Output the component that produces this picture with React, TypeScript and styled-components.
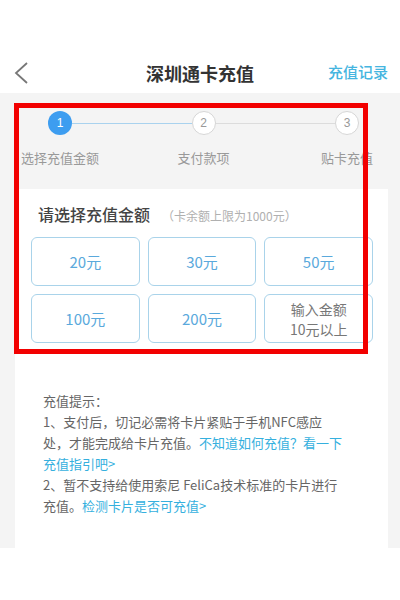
import * as React from "react";
import styled, { createGlobalStyle } from "styled-components";

const GlobalStyle = createGlobalStyle`
  html, body {
    margin: 0;
    padding: 0;
    background: #fff;
  }
  body {
    font-family: "Noto Sans CJK SC", "Noto Sans", sans-serif;
    color: #444;
  }
`;

const AMOUNTS = ["20元", "30元", "50元", "100元", "200元"];

const STEPS = [
  { n: 1, label: "选择充值金额", active: true },
  { n: 2, label: "支付款项", active: false },
  { n: 3, label: "贴卡充值", active: false },
];

const App = () => (
  <Page>
    <GlobalStyle />
    <NavBar>
      <BackButton aria-label="返回">
        <svg width="16" height="24" viewBox="0 0 16 24">
          <polyline points="13,2 2,12 13,22" fill="none" stroke="#777" strokeWidth="1.8" />
        </svg>
      </BackButton>
      <Title>深圳通卡充值</Title>
      <NavLink>充值记录</NavLink>
    </NavBar>

    <Body>
      <Stepper>
        {STEPS.map((s, i) => (
          <React.Fragment key={s.n}>
            {i > 0 && <Connector done={i === 1} />}
            <Step>
              <StepDot active={s.active}>{s.n}</StepDot>
              <StepLabel>{s.label}</StepLabel>
            </Step>
          </React.Fragment>
        ))}
      </Stepper>

      <Card>
        <CardTitle>
          请选择充值金额<Hint>（卡余额上限为1000元）</Hint>
        </CardTitle>
        <AmountGrid>
          {AMOUNTS.map((a) => (
            <AmountButton key={a}>{a}</AmountButton>
          ))}
          <AmountButton custom>
            <span>输入金额</span>
            <span>10元以上</span>
          </AmountButton>
        </AmountGrid>

        <Tips>
          <TipLine>充值提示：</TipLine>
          <TipLine>1、支付后，切记必需将卡片紧贴于手机NFC感应</TipLine>
          <TipLine>
            处，才能完成给卡片充值。<TipLink>不知道如何充值？看一下</TipLink>
          </TipLine>
          <TipLine>
            <TipLink>充值指引吧&gt;</TipLink>
          </TipLine>
          <TipLine>2、暂不支持给使用索尼 FeliCa技术标准的卡片进行</TipLine>
          <TipLine>
            充值。<TipLink>检测卡片是否可充值&gt;</TipLink>
          </TipLine>
        </Tips>
      </Card>
    </Body>

    <Highlight />
  </Page>
);

const Page = styled.div`
  position: relative;
  width: 400px;
  height: 600px;
  overflow: hidden;
  background: #fff;
  padding-top: 52px;
  box-sizing: border-box;
`;

const NavBar = styled.div`
  display: flex;
  align-items: center;
  justify-content: center;
  height: 41px;
  position: relative;
`;

const BackButton = styled.div`
  position: absolute;
  left: 14px;
  top: 9px;
  display: flex;
`;

const Title = styled.div`
  font-size: 18px;
  font-weight: 700;
  color: #333;
`;

const NavLink = styled.div`
  position: absolute;
  right: 12px;
  top: 9px;
  font-size: 15px;
  font-weight: 500;
  color: #45b5e0;
`;

const Body = styled.div`
  background: #f4f4f4;
  height: 455px;
  padding: 18px 12px 0 15px;
  box-sizing: border-box;
`;

const Stepper = styled.div`
  display: flex;
  align-items: flex-start;
  padding: 0 29px 0 33px;
  height: 78px;
`;

const Step = styled.div`
  width: 24px;
  display: flex;
  flex-direction: column;
  align-items: center;
`;

const StepDot = styled.div<{ active: boolean }>`
  width: 24px;
  height: 24px;
  border-radius: 50%;
  box-sizing: border-box;
  display: flex;
  align-items: center;
  justify-content: center;
  font-family: "Liberation Sans", sans-serif;
  font-size: 12px;
  color: ${(p) => (p.active ? "#fff" : "#999")};
  background: ${(p) => (p.active ? "#3d9df0" : "#fff")};
  border: ${(p) => (p.active ? "none" : "1px solid #d6d6d6")};
`;

const StepLabel = styled.div`
  margin-top: 13px;
  white-space: nowrap;
  font-size: 13px;
  color: #999;
`;

const Connector = styled.div<{ done: boolean }>`
  flex: 1;
  height: 1px;
  margin-top: 12px;
  background: ${(p) => (p.done ? "#a9d2ee" : "#dcdcdc")};
`;

const Card = styled.div`
  background: #fff;
  height: 359px;
  padding: 15px 15px 0 16px;
  box-sizing: border-box;
`;

const CardTitle = styled.div`
  padding-left: 7px;
  font-size: 16px;
  line-height: 20px;
  font-weight: 500;
  color: #444;
`;

const Hint = styled.span`
  margin-left: 12px;
  font-size: 12px;
  font-weight: 400;
  color: #b0b0b0;
`;

const AmountGrid = styled.div`
  display: grid;
  grid-template-columns: repeat(3, 1fr);
  grid-auto-rows: 49px;
  gap: 8px;
  margin-top: 11px;
`;

const AmountButton = styled.div<{ custom?: boolean }>`
  display: flex;
  flex-direction: column;
  align-items: center;
  justify-content: center;
  text-align: center;
  border: 1.5px solid #a9d3ea;
  border-radius: 6px;
  font-size: ${(p) => (p.custom ? "14px" : "15px")};
  line-height: 20px;
  color: ${(p) => (p.custom ? "#777" : "#5aa9dc")};
`;

const Tips = styled.div`
  margin: 47px 0 0 12px;
  font-size: 13px;
  line-height: 21px;
  color: #666;
`;

const TipLine = styled.div`
  white-space: nowrap;
`;

const TipLink = styled.span`
  color: #35b0de;
`;

// annotation frame drawn over the screenshot
const Highlight = styled.div`
  position: absolute;
  left: 14px;
  top: 103px;
  width: 354px;
  height: 251px;
  box-sizing: border-box;
  border: 5px solid #f20000;
  pointer-events: none;
`;

export default App;
